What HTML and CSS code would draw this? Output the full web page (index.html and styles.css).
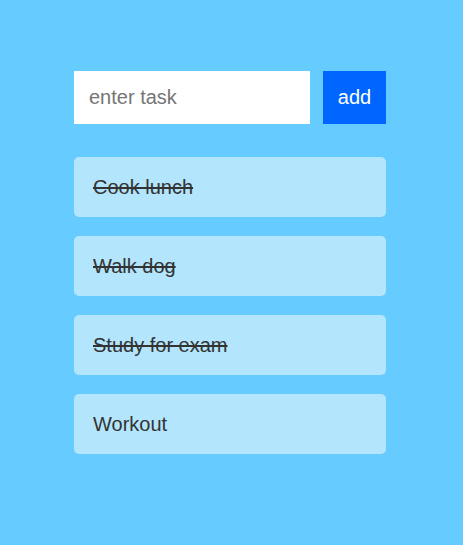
FILE: index.html
```html
<!DOCTYPE html>
<html>
<head>
<meta charset="utf-8">
<link rel="stylesheet" href="styles.css">
</head>
<body>
<div class="app">
  <div class="form">
    <input class="task-input" type="text" placeholder="enter task">
    <button class="add-btn">add</button>
  </div>
  <ul class="list">
    <li class="item done">Cook lunch</li>
    <li class="item done">Walk dog</li>
    <li class="item done">Study for exam</li>
    <li class="item">Workout</li>
  </ul>
</div>
</body>
</html>
```
FILE: styles.css
```css
html, body {
  margin: 0;
  padding: 0;
  background: #66ccff;
  height: 100%;
}
body {
  font-family: "Liberation Sans", Arial, sans-serif;
}
.app {
  width: 312px;
  margin: 0 0 0 74px;
  padding-top: 71px;
}
.form {
  display: flex;
  gap: 13px;
  height: 53px;
}
.task-input {
  width: 236px;
  box-sizing: border-box;
  border: none;
  outline: none;
  background: #fff;
  padding: 0 15px;
  font-family: "Liberation Sans", Arial, sans-serif;
  font-size: 20px;
  color: #333;
}
.task-input::placeholder {
  color: #757575;
}
.add-btn {
  width: 63px;
  border: none;
  background: #0066ff;
  color: #fff;
  font-family: "Liberation Sans", Arial, sans-serif;
  font-size: 20px;
  padding: 0;
}
.list {
  list-style: none;
  margin: 33px 0 0;
  padding: 0;
  display: flex;
  flex-direction: column;
  gap: 19px;
}
.item {
  height: 60px;
  box-sizing: border-box;
  background: #b3e5fc;
  border-radius: 5px;
  padding: 0 19px;
  display: flex;
  align-items: center;
  font-size: 20px;
  color: #333;
}
.item.done {
  text-decoration: line-through;
}
```
